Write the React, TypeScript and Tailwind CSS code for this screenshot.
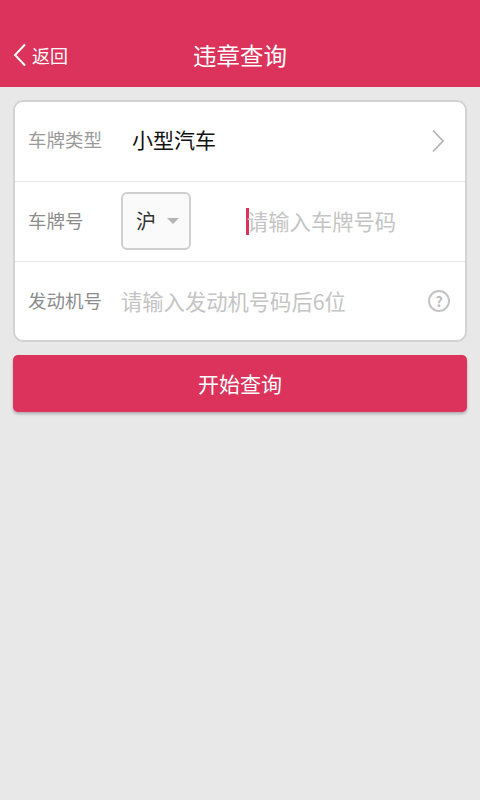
const cjk = "font-['Noto_Sans_CJK_SC','Noto_Sans',sans-serif]";

export default function App() {
  return (
    <div className={`w-[480px] h-[800px] flex flex-col bg-[#e8e8e8] ${cjk}`}>
      {/* Header */}
      <div className="h-[88px] flex-shrink-0 bg-[#db335b] border-b border-[#e8e8e8] flex items-end pb-[14px] relative">
        <div className="flex items-center pl-[13px] h-[36px]">
          <svg width="14" height="24" viewBox="0 0 14 24" fill="none" stroke="#fff" strokeWidth="2">
            <path d="M12 1.5 L2 12 L12 22.5" />
          </svg>
          <span className="ml-[5px] text-[18px] leading-[36px] text-white">返回</span>
        </div>
        <div className="absolute left-0 right-0 bottom-[14px] text-center text-[23.5px] leading-[36px] text-white">违章查询</div>
      </div>

      <div className="px-[13px] pt-[12px] flex flex-col gap-[13px]">
        {/* Form card */}
        <div className="bg-white border-2 border-[#d2d2d2] rounded-[10px] flex flex-col">
          <div className="h-[80px] flex items-center pl-[13px] pr-[20px] border-b border-[#e6e6e6]">
            <span className="w-[104px] text-[18.5px] text-[#9a9a9a] -mt-[4px]">车牌类型</span>
            <span className="flex-1 text-[21px] text-[#111] -mt-[4px]">小型汽车</span>
            <svg className="-mt-[2px]" width="14" height="24" viewBox="0 0 14 24" fill="none" stroke="#b4b4b4" strokeWidth="1.8">
              <path d="M2 1.5 L12 12 L2 22.5" />
            </svg>
          </div>

          <div className="h-[80px] flex items-center pl-[13px] border-b border-[#e6e6e6]">
            <span className="w-[93px] text-[18.5px] text-[#8c8c8c] -mt-px">车牌号</span>
            <div className="w-[70px] h-[58px] -mt-px flex items-center pl-[13px] bg-[#fafafa] border-2 border-[#cfcfcf] rounded-[6px]">
              <span className="text-[20px] text-[#333]">沪</span>
              <span className="ml-[11px] w-0 h-0 border-x-[6px] border-x-transparent border-t-[6px] border-t-[#b4b4b4]"></span>
            </div>
            <span className="ml-[55px] w-[3px] h-[27px] -mt-px bg-[#dc335b]"></span>
            <span className="text-[21.3px] text-[#c4c4c4] -ml-[2px] -mt-px">请输入车牌号码</span>
          </div>

          <div className="h-[78px] flex items-center pl-[13px] pr-[15px]">
            <span className="w-[93px] text-[18.5px] text-[#8c8c8c] -mt-px">发动机号</span>
            <span className="flex-1 text-[21.3px] text-[#c4c4c4] -mt-px">请输入发动机号码后6位</span>
            <div className="w-[22px] h-[22px] rounded-full border-2 border-[#c4c4c4] flex items-center justify-center text-[14px] font-bold leading-none text-[#bcbcbc]">?</div>
          </div>
        </div>

        {/* Submit */}
        <button className="h-[57px] w-full rounded-[5px] bg-[#db335b] text-white text-[21px] shadow-[0_2px_3px_rgba(0,0,0,0.25)]">开始查询</button>
      </div>
    </div>
  );
}
